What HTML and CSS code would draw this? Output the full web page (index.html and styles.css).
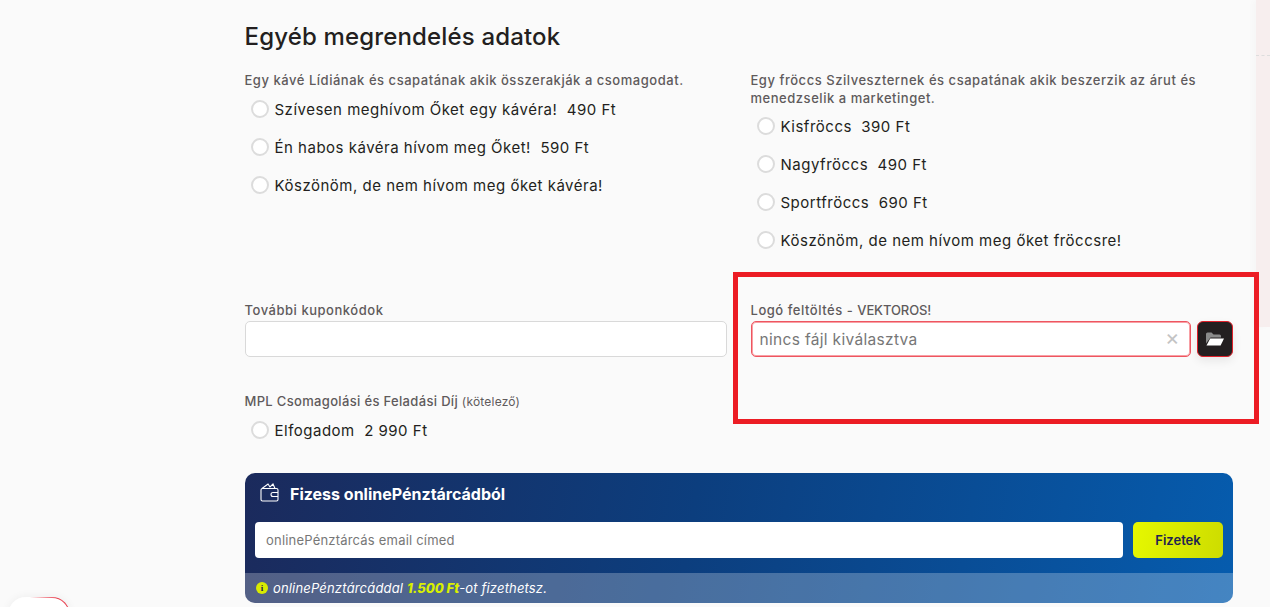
FILE: index.html
```html
<!DOCTYPE html>
<html lang="hu">
<head>
<meta charset="utf-8">
<title>Egyéb megrendelés adatok</title>
<link rel="stylesheet" href="styles.css">
</head>
<body>
<aside class="side-strip"><div class="side-dash"></div></aside>
<main class="page">
  <h2 class="title">Egyéb megrendelés adatok</h2>
  <div class="two-col">
    <section>
      <p class="label label-gap">Egy kávé Lídiának és csapatának akik összerakják a csomagodat.</p>
      <div class="opt"><span class="radio"></span><span>Szívesen meghívom Őket egy kávéra!&nbsp; 490 Ft</span></div>
      <div class="opt"><span class="radio"></span><span>Én habos kávéra hívom meg Őket!&nbsp; 590 Ft</span></div>
      <div class="opt"><span class="radio"></span><span>Köszönöm, de nem hívom meg őket kávéra!</span></div>
    </section>
    <section>
      <p class="label">Egy fröccs Szilveszternek és csapatának akik beszerzik az árut és menedzselik a marketinget.</p>
      <div class="opt"><span class="radio"></span><span>Kisfröccs&nbsp; 390 Ft</span></div>
      <div class="opt"><span class="radio"></span><span>Nagyfröccs&nbsp; 490 Ft</span></div>
      <div class="opt"><span class="radio"></span><span>Sportfröccs&nbsp; 690 Ft</span></div>
      <div class="opt"><span class="radio"></span><span>Köszönöm, de nem hívom meg őket fröccsre!</span></div>
    </section>
  </div>
  <div class="two-col fields">
    <section>
      <p class="label">További kuponkódok</p>
      <div class="input"></div>
    </section>
    <section>
      <p class="label">Logó feltöltés - <span class="caps">VEKTOROS!</span></p>
      <div class="file-row">
        <div class="input file-input"><span>nincs fájl kiválasztva</span><span class="clear">×</span></div>
        <button class="file-btn" type="button" aria-label="Fájl választása">
          <svg width="18" height="14" viewBox="0 0 18 14"><path fill="#8a8a8a" d="M0 2a1.500 1.500 0 0 1 1.500-1.500h4L7.500 2.500h6A1.500 1.500 0 0 1 15 4v1.500H4.500L0 11.500z"/><path fill="#fff" d="M4.200 6.500H18l-3.400 7H.5z"/></svg>
        </button>
      </div>
    </section>
  </div>
  <section class="mpl">
    <p class="label mpl-label">MPL Csomagolási és Feladási Díj <small>(kötelező)</small></p>
    <div class="opt"><span class="radio"></span><span>Elfogadom&nbsp; 2 990 Ft</span></div>
  </section>
  <section class="wallet">
    <div class="wallet-head">
      <svg class="wallet-icon" width="21" height="19" viewBox="0 0 21 19" fill="none" stroke="#fff" stroke-width="1.100"><path d="M2 5.500 8 1l2 3 3-3 2 4.500"/><rect x="1" y="5.500" width="17" height="12.500" rx="1.500"/><path d="M18 9.500h-5a1.800 1.800 0 0 0 0 4h5"/></svg>
      <strong>Fizess onlinePénztárcádból</strong>
    </div>
    <div class="wallet-form">
      <div class="wallet-input">onlinePénztárcás email címed</div>
      <button class="pay" type="button">Fizetek</button>
    </div>
    <div class="wallet-foot">
      <span class="info">i</span>
      <em>onlinePénztárcáddal <b>1.500 Ft</b>-ot fizethetsz.</em>
    </div>
  </section>
</main>
<div class="annotation"></div>
<div class="corner-widget"></div>
</body>
</html>
```
FILE: styles.css
```css
* { box-sizing: border-box; }
html, body { height: 100%; }
body {
  margin: 0;
  height: 607px;
  overflow: hidden;
  background: #fafafa;
  color: #231f20;
  font-family: Inter, "Liberation Sans", sans-serif;
  position: relative;
}
.page { width: 988px; margin-left: 245px; padding-top: 22px; }
.title { margin: 0 0 19px -0.5px; font-size: 24px; line-height: 30px; font-weight: 500; letter-spacing: .16px; }
.two-col { display: grid; grid-template-columns: 482px 482px; column-gap: 24px; }
.label { margin: 0 0 0 -0.5px; font-size: 13px; line-height: 18px; color: #5f5a5c; font-weight: 500; letter-spacing: .53px; }
.label-gap { margin-bottom: 1px; }
.mpl-label { letter-spacing: .33px; }
.label small { font-size: 12px; font-weight: 400; letter-spacing: .2px; }
.caps { letter-spacing: -.1px; }
.opt { display: flex; align-items: center; gap: 5.500px; height: 38px; padding-left: 6px; font-size: 15px; letter-spacing: .5px; }
.radio { width: 18px; height: 18px; border-radius: 50%; border: 2px solid #dcdcdc; background: #fff; flex: none; }
.fields { margin-top: 42px; }
.input { height: 36px; margin-top: 2px; background: #fff; border: 1px solid #d9d9d9; border-radius: 5px; }
.file-row { display: flex; gap: 6px; margin-top: 2px; }
.file-input { flex: 1; margin: 0; display: flex; align-items: center; justify-content: space-between; padding: 0 10px 0 7.500px; font-size: 15.500px; letter-spacing: .32px; color: #777; border: 1px solid #ee5560; box-shadow: inset 0 0 0 1px #f8a0a5; }
.clear { color: #c4c4c4; font-size: 22px; line-height: 1; padding-bottom: 4px; }
.file-btn { width: 36px; height: 36px; padding: 0; display: flex; align-items: center; justify-content: center; background: #231f20; border: 1px solid #e0202a; border-radius: 6px; box-shadow: 0 4px 10px rgba(0,0,0,.08); }
.mpl { margin-top: 35px; }
.wallet { margin-top: 24px; height: 130px; border-radius: 10px; overflow: hidden; display: flex; flex-direction: column; background: linear-gradient(100deg, #1b2a5c 0%, #0c3e7e 45%, #065cae 100%); }
.wallet-head { display: flex; align-items: center; gap: 9px; height: 42px; margin-bottom: 7px; padding: 0 0 0 15px; color: #fff; font-size: 16px; }
.wallet-head strong { font-weight: 700; }
.wallet-icon { margin-top: -3px; }
.wallet-form { display: flex; gap: 10px; padding: 0 10px; height: 36px; }
.wallet-input { flex: 1; background: #fff; border-radius: 4px; font-size: 13px; color: #777; line-height: 36px; padding-left: 11px; letter-spacing: .2px; }
.pay { width: 90px; border: 0; border-radius: 5px; background: linear-gradient(100deg, #e6f800, #cddc00); color: #1f2350; font: 600 13px/1 Inter, sans-serif; }
.wallet-foot { margin-top: 15px; height: 30px; display: flex; align-items: center; gap: 5px; padding-left: 11px; background: rgba(255,255,255,.25); color: #fff; font-size: 13px; letter-spacing: .16px; }
.wallet-foot b { color: #d9f000; font-weight: 800; letter-spacing: 0; }
.info { width: 12px; height: 12px; border-radius: 50%; background: #d9ea00; color: #1f2350; font: 700 9px/12px "Liberation Serif", serif; text-align: center; }
.side-strip { position: absolute; left: 1256px; top: 0; width: 14px; height: 327px; background: #f7eeee; box-shadow: -3px 0 6px rgba(0,0,0,.02); }
.side-dash { margin-top: 55px; border-top: 1px dashed #ddd; }
.annotation { position: absolute; left: 733px; top: 272px; width: 526px; height: 152px; border: 5px solid #ec1c24; }
.corner-widget { position: absolute; left: 8px; top: 597px; width: 62px; height: 40px; border-radius: 18px; border: 1.500px solid transparent; background: linear-gradient(#fff, #fff) padding-box, linear-gradient(90deg, #fff 35%, #e8404f 80%) border-box; box-shadow: 0 0 10px rgba(0,0,0,.06); }
```
